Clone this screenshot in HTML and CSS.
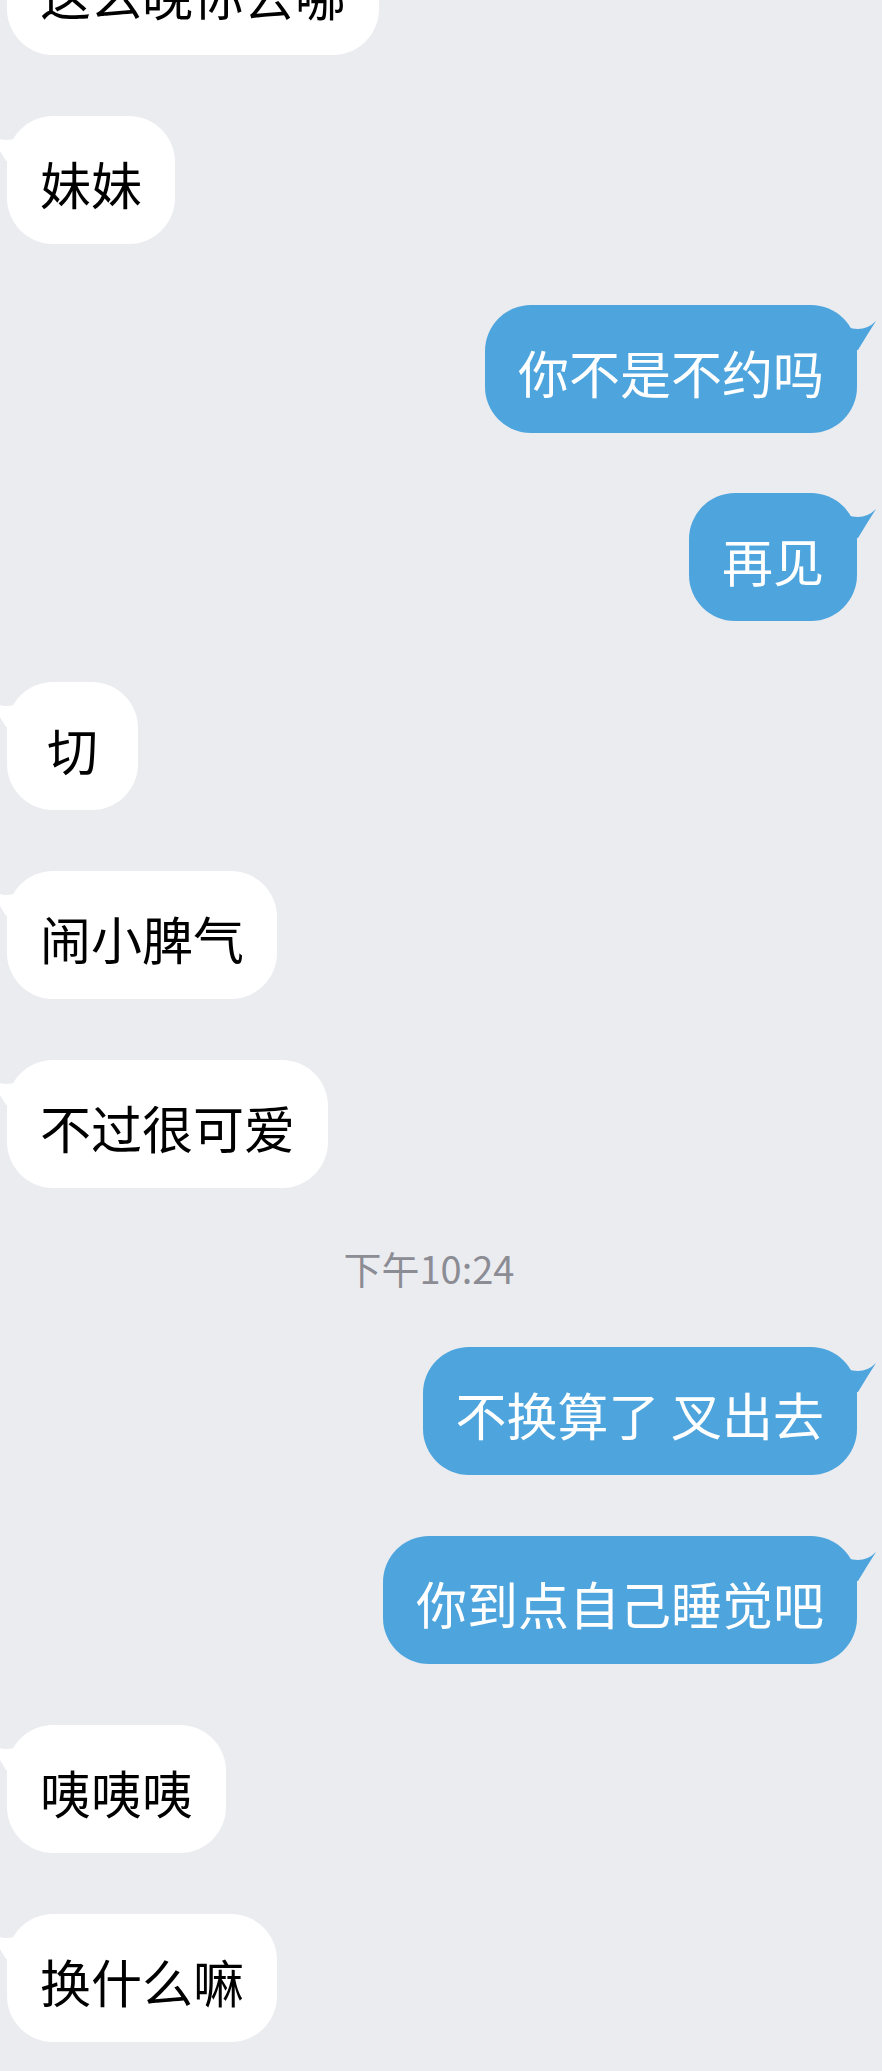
FILE: index.html
```html
<!DOCTYPE html>
<html lang="zh-CN">
<head>
<meta charset="utf-8">
<title>Chat</title>
<link rel="stylesheet" href="styles.css">
</head>
<body>
<main class="chat">
  <div class="row in"><div class="bubble"><svg class="tail" viewBox="0 0 30 32"><path d="M0 9 Q17 15 29 3 Q20 17 11 32 L0 32 Z"/></svg>这么晚你去哪</div></div>
  <div class="row in"><div class="bubble"><svg class="tail" viewBox="0 0 30 32"><path d="M0 9 Q17 15 29 3 Q20 17 11 32 L0 32 Z"/></svg>妹妹</div></div>
  <div class="row out"><div class="bubble"><svg class="tail" viewBox="0 0 30 32"><path d="M0 9 Q17 15 29 3 Q20 17 11 32 L0 32 Z"/></svg>你不是不约吗</div></div>
  <div class="row out"><div class="bubble"><svg class="tail" viewBox="0 0 30 32"><path d="M0 9 Q17 15 29 3 Q20 17 11 32 L0 32 Z"/></svg>再见</div></div>
  <div class="row in"><div class="bubble"><svg class="tail" viewBox="0 0 30 32"><path d="M0 9 Q17 15 29 3 Q20 17 11 32 L0 32 Z"/></svg>切</div></div>
  <div class="row in"><div class="bubble"><svg class="tail" viewBox="0 0 30 32"><path d="M0 9 Q17 15 29 3 Q20 17 11 32 L0 32 Z"/></svg>闹小脾气</div></div>
  <div class="row in"><div class="bubble"><svg class="tail" viewBox="0 0 30 32"><path d="M0 9 Q17 15 29 3 Q20 17 11 32 L0 32 Z"/></svg>不过很可爱</div></div>
  <div class="time">下午10:24</div>
  <div class="row out"><div class="bubble"><svg class="tail" viewBox="0 0 30 32"><path d="M0 9 Q17 15 29 3 Q20 17 11 32 L0 32 Z"/></svg>不换算了 叉出去</div></div>
  <div class="row out"><div class="bubble"><svg class="tail" viewBox="0 0 30 32"><path d="M0 9 Q17 15 29 3 Q20 17 11 32 L0 32 Z"/></svg>你到点自己睡觉吧</div></div>
  <div class="row in"><div class="bubble"><svg class="tail" viewBox="0 0 30 32"><path d="M0 9 Q17 15 29 3 Q20 17 11 32 L0 32 Z"/></svg>咦咦咦</div></div>
  <div class="row in"><div class="bubble"><svg class="tail" viewBox="0 0 30 32"><path d="M0 9 Q17 15 29 3 Q20 17 11 32 L0 32 Z"/></svg>换什么嘛</div></div>
</main>
</body>
</html>
```

FILE: styles.css
```css
html, body {
  margin: 0;
  padding: 0;
}
body {
  width: 882px;
  height: 2071px;
  overflow: hidden;
  background: #ebecf0;
  font-family: "Noto Sans CJK SC", "Noto Sans", sans-serif;
}
.chat {
  display: flex;
  flex-direction: column;
  gap: 60.8px;
  margin-top: -73px;
  padding: 0 25px 0 7px;
}
.row {
  display: flex;
}
.row.in {
  justify-content: flex-start;
}
.row.out {
  justify-content: flex-end;
}
.bubble {
  position: relative;
  box-sizing: border-box;
  height: 128px;
  min-width: 131px;
  padding: 31px 33px 25px;
  font-size: 51px;
  line-height: 72px;
  text-align: center;
  border-radius: 46px;
  white-space: pre;
}
.in .bubble {
  background: #ffffff;
  color: #000000;
}
.out .bubble {
  background: #4ea5de;
  color: #ffffff;
}
.tail {
  position: absolute;
  top: 13px;
  width: 30px;
  height: 32px;
}
.out .tail {
  right: -20px;
  fill: #4ea5de;
}
.in .tail {
  left: -20px;
  fill: #ffffff;
  transform: scaleX(-1);
}
.time {
  height: 38px;
  line-height: 38px;
  font-size: 38px;
  font-weight: 400;
  color: #8c8c94;
  text-align: center;
  padding-right: 6px;
}
```
